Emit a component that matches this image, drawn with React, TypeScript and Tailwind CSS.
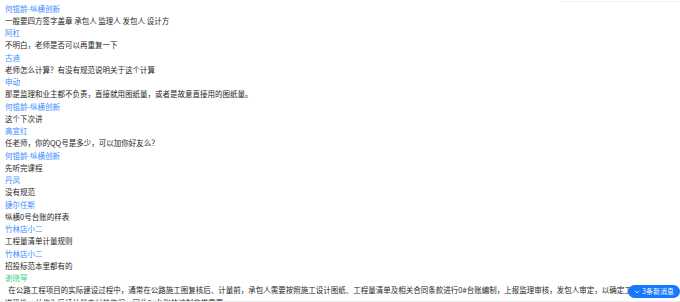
import React from "react";

const msgs: { name: string; text: string; green?: boolean }[] = [
  { name: "何锟龄-纵横创新", text: "一般要四方签字盖章 承包人 监理人 发包人 设计方" },
  { name: "阿杠", text: "不明白，老师是否可以再重复一下" },
  { name: "古迪", text: "老师怎么计算？有没有规范说明关于这个计算" },
  { name: "申动", text: "那是监理和业主都不负责，直接就用图纸量，或者是故意直接用的图纸量。" },
  { name: "何锟龄-纵横创新", text: "这个下次讲" },
  { name: "高宜红", text: "任老师，你的QQ号是多少，可以加你好友么？" },
  { name: "何锟龄-纵横创新", text: "先听完课程" },
  { name: "丹凤", text: "没有规范" },
  { name: "捷尔任斯", text: "纵横0号台账的样表" },
  { name: "竹林店小二", text: "工程量清单计量规则" },
  { name: "竹林店小二", text: "招投标范本里都有的" },
  {
    name: "谢晓琴",
    green: true,
    text: "\u00a0\u00a0在公路工程项目的实际建设过程中，通常在公路施工图复核后、计量前，承包人需要按照施工设计图纸、工程量清单及相关合同条款进行0#台账编制，上报监理审核，发包人审定，以确定工程量清单的准确性，并作为后续计量支付的依据，因此0#台账的编制非常重要。",
  },
];

export default function App() {
  return (
    <div
      className="relative w-[680px] h-[302px] overflow-hidden bg-white"
      style={{ fontFamily: '"Noto Sans CJK SC", "Noto Sans", sans-serif' }}
    >
      <div className="absolute top-0 right-0 w-[120px] h-[2px] border-b border-[#f0f0f0]" />
      <div className="pl-[5px] pr-[8px] pt-[2.5px] text-[7.5px] leading-[12.25px]">
        {msgs.map((m, i) => (
          <div key={i}>
            <div className={m.green ? "text-[#4fcf8c]" : "text-[#3b8cff]"}>{m.name}</div>
            <div className="text-[#262626]">{m.text}</div>
          </div>
        ))}
      </div>
      <div className="absolute bottom-0 left-0 right-0 h-[1px] bg-[#eeeeee]" />
      <div className="absolute left-[628px] top-[285px] h-[13px] w-[52px] rounded-full bg-[#1677ff] text-white text-[7px] leading-[13px] flex items-center justify-center gap-[2px]">
        <svg width="6" height="6" viewBox="0 0 10 10" fill="none">
          <path d="M2 3.5 L5 6.5 L8 3.5" stroke="white" strokeWidth="1.4" strokeLinecap="round" strokeLinejoin="round" />
        </svg>
        <span>3条新消息</span>
      </div>
    </div>
  );
}
